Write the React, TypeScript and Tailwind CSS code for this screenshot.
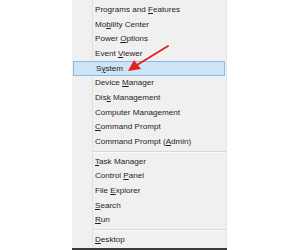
type Item = { pre: string; key: string; post: string; active?: boolean };

const groups: Item[][] = [
  [
    { pre: "Programs and ", key: "F", post: "eatures" },
    { pre: "Mo", key: "b", post: "ility Center" },
    { pre: "Power ", key: "O", post: "ptions" },
    { pre: "Event ", key: "V", post: "iewer" },
    { pre: "S", key: "y", post: "stem", active: true },
    { pre: "Device ", key: "M", post: "anager" },
    { pre: "Dis", key: "k", post: " Management" },
    { pre: "Computer Mana", key: "g", post: "ement" },
    { pre: "", key: "C", post: "ommand Prompt" },
    { pre: "Command Prompt (", key: "A", post: "dmin)" },
  ],
  [
    { pre: "", key: "T", post: "ask Manager" },
    { pre: "Control ", key: "P", post: "anel" },
    { pre: "File ", key: "E", post: "xplorer" },
    { pre: "", key: "S", post: "earch" },
    { pre: "", key: "R", post: "un" },
  ],
  [{ pre: "", key: "D", post: "esktop" }],
];

function Row({ item }: { item: Item }) {
  return (
    <div
      className={
        item.active
          ? "h-[14.67px] flex items-center pl-[22px] ml-[1px] mr-[1px] bg-[#cde3f6] border border-[#8ab9e6]"
          : "h-[14.67px] flex items-center pl-[23px]"
      }
    >
      <span className="text-[8.1px] leading-none text-[#1e1e1e] whitespace-nowrap">
        {item.pre}
        <span className="underline underline-offset-[1px] decoration-[0.6px]">{item.key}</span>
        {item.post}
      </span>
    </div>
  );
}

function Separator() {
  return (
    <div className="h-[5.33px] flex flex-col justify-center pl-[21px]">
      <div className="h-px bg-[#d8d8d8]" />
      <div className="h-px bg-[#fbfbfb]" />
    </div>
  );
}

export default function App() {
  return (
    <div
      className="w-[300px] h-[250px] bg-white relative overflow-hidden"
      style={{ fontFamily: '"Liberation Sans", Arial, sans-serif' }}
    >
      <div className="ml-[72px] w-[155px] h-[248px] bg-[#f0f0f0] border-r border-[#e4e4e4] relative pt-[2.67px]">
        {/* gutter line */}
        <div className="absolute left-[20px] top-0 bottom-0 w-px bg-[#e2e2e2]" />
        <div className="relative">
          {groups.map((g, gi) => (
            <div key={gi}>
              {gi > 0 && <Separator />}
              {g.map((item) => (
                <Row key={item.pre + item.key + item.post} item={item} />
              ))}
            </div>
          ))}
        </div>
      </div>
      <div className="ml-[72px] w-[155px] h-[2px] bg-[#3a3a3a]" />

      {/* red annotation arrow */}
      <svg className="absolute left-0 top-0" width="300" height="250" viewBox="0 0 300 250">
        <line x1="168" y1="46" x2="137" y2="65" stroke="#e1221f" strokeWidth="2" strokeLinecap="round" />
        <polygon points="128,71 134,60 141,69" fill="#e1221f" />
      </svg>
    </div>
  );
}
